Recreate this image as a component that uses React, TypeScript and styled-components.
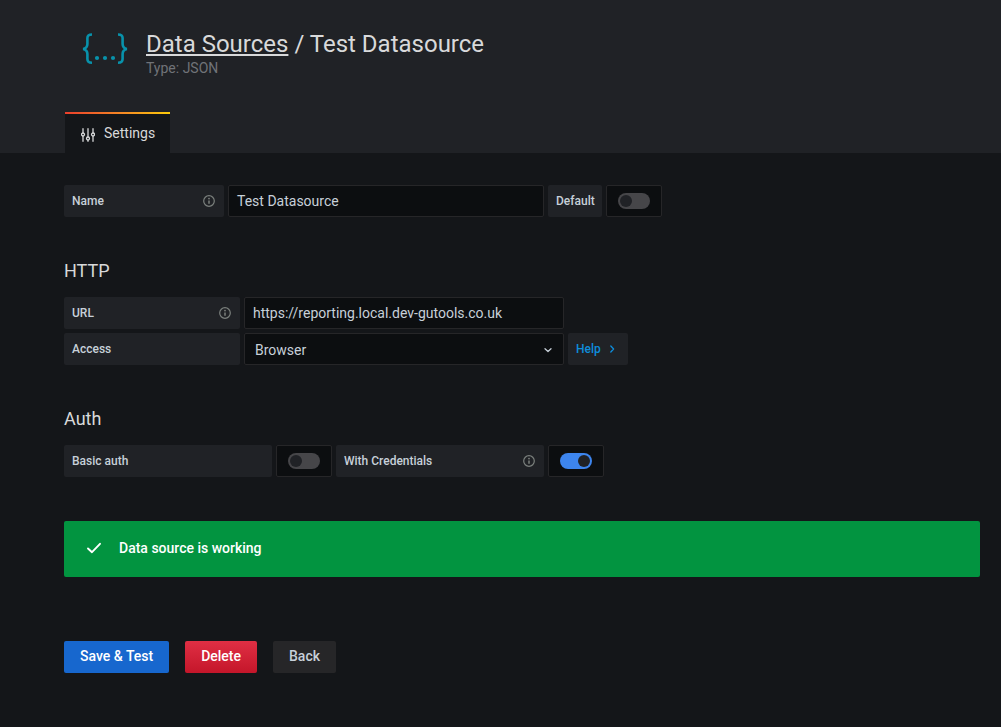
import React from 'react';
import styled, { createGlobalStyle } from 'styled-components';

const Global = createGlobalStyle`
  html, body {
    margin: 0;
    background: #141619;
    font-family: Roboto, "Liberation Sans", sans-serif;
    color: #c7d0d9;
  }
  * { box-sizing: border-box; }
`;

const Header = styled.header`
  height: 153px;
  background: #202226;
  padding: 0 64px 0 65px;
  display: flex;
  flex-direction: column;
  justify-content: space-between;
`;

const HeaderMain = styled.div`
  display: flex;
  padding: 31px 0 0 17px;
`;

const Logo = styled.div`
  display: flex;
  padding-top: 1px;
`;

const Titles = styled.div`
  margin-left: 18px;
`;

const Title = styled.h1`
  margin: 0;
  font-size: 24px;
  font-weight: 400;
  line-height: 26px;
  color: #d8d9da;
  a {
    color: inherit;
    text-decoration: underline;
    text-decoration-thickness: 2px;
    text-underline-offset: 2px;
  }
`;

const SubTitle = styled.div`
  font-size: 14px;
  line-height: 14px;
  margin-top: 4px;
  color: #707378;
`;

const Tab = styled.div`
  width: 105px;
  height: 41px;
  background: linear-gradient(90deg, #eb3f2c, #f58a24 55%, #fbca0a) top / 100% 2px no-repeat, #141619;
  display: flex;
  align-items: center;
  gap: 9px;
  padding: 1px 0 0 16px;
  font-size: 14px;
  color: #d8d9da;
`;

const SlidersSvg = styled.svg`
  margin-top: 3px;
`;

const Main = styled.main`
  padding: 32px 21px 0 64px;
`;

const Row = styled.div`
  display: flex;
  gap: 4px;
  margin-bottom: 4px;
`;

const Label = styled.div<{ $width: number }>`
  width: ${p => p.$width}px;
  height: 32px;
  flex: none;
  background: #202226;
  border-radius: 2px;
  padding: 0 9px 0 8px;
  display: flex;
  align-items: center;
  justify-content: space-between;
  font-size: 12px;
  font-weight: 500;
  color: #c7d0d9;
`;

const Field = styled.div<{ $width: number }>`
  width: ${p => p.$width}px;
  height: 32px;
  flex: none;
  background: #0c0e10;
  border: 1px solid #262628;
  border-radius: 2px;
  padding: 0 10px 0 8px;
  display: flex;
  align-items: center;
  justify-content: space-between;
  font-size: 14px;
  color: #c7d0d9;
`;

const SelectField = styled(Field)`
  padding: 2px 10px 0 10px;
`;

const SwitchBox = styled.div`
  width: 56px;
  height: 32px;
  flex: none;
  background: #0c0e10;
  border: 1px solid #262628;
  border-radius: 2px;
  display: flex;
  align-items: center;
  justify-content: center;
`;

const Track = styled.div<{ $on?: boolean }>`
  width: 32px;
  height: 16px;
  border-radius: 8px;
  background: ${p => (p.$on ? '#3d85ee' : '#464649')};
  padding: 2px;
  display: flex;
  justify-content: ${p => (p.$on ? 'flex-end' : 'flex-start')};
`;

const Knob = styled.div`
  width: 12px;
  height: 12px;
  border-radius: 50%;
  background: #202226;
`;

const Heading = styled.h3`
  margin: 0 0 16px;
  font-size: 18px;
  font-weight: 400;
  line-height: 20px;
  color: #d8d9da;
`;

const Section = styled.section`
  margin-top: 44px;
`;

const HelpButton = styled.div`
  width: 60px;
  height: 32px;
  background: #202226;
  border-radius: 2px;
  padding-left: 8px;
  display: flex;
  align-items: center;
  gap: 6px;
  font-size: 12px;
  font-weight: 500;
  color: #0e8ddb;
`;

const Alert = styled.div`
  width: 916px;
  height: 56px;
  margin-top: 44px;
  background: #029440;
  border-radius: 2px;
  padding: 0 0 2px 22px;
  display: flex;
  align-items: center;
  gap: 17px;
  font-size: 14px;
  font-weight: 500;
  color: #fff;
`;

const Actions = styled.div`
  display: flex;
  gap: 16px;
  margin-top: 64px;
`;

const Button = styled.button<{ $kind: 'primary' | 'danger' | 'secondary' }>`
  height: 32px;
  padding: 0 16px 2px;
  border: 0;
  border-radius: 2px;
  font-family: inherit;
  font-size: 14px;
  font-weight: 500;
  color: ${p => (p.$kind === 'secondary' ? '#c7d0d9' : '#fff')};
  background: ${p =>
    p.$kind === 'primary'
      ? '#1767ce'
      : p.$kind === 'danger'
        ? 'linear-gradient(180deg, #e02f44, #c4162a)'
        : '#262628'};
`;

const JsonLogo = () => (
  <svg width="46" height="33" viewBox="0 0 46 33" fill="none" stroke="#0892ab" strokeWidth="2.6">
    <path d="M10 2.5C6.4 2.5 5.4 3.6 5.4 6V12C5.4 14.8 4.4 16.2 1.2 17C4.4 17.8 5.4 19.2 5.4 22V27C5.4 29.6 6.4 30.8 10 30.8" />
    <path d="M36 2.5C39.6 2.5 40.6 3.6 40.6 6V12C40.6 14.8 41.6 16.2 44.8 17C41.6 17.8 40.6 19.2 40.6 22V27C40.6 29.6 39.6 30.8 36 30.8" />
    <g fill="#0892ab" stroke="none">
      <circle cx="15" cy="26" r="2.1" />
      <circle cx="23" cy="26" r="2.1" />
      <circle cx="31" cy="26" r="2.1" />
    </g>
  </svg>
);

const SlidersIcon = () => (
  <SlidersSvg width="14" height="14" viewBox="0 0 14 14" fill="none" stroke="#d8d9da" strokeWidth="1.3" strokeLinecap="round">
    <path d="M2 .7V5M2 8V13.3M7 .7V9M7 12V13.3M12 .7V5M12 8V13.3" />
    <circle cx="2" cy="6.5" r="1.5" />
    <circle cx="7" cy="10.5" r="1.5" />
    <circle cx="12" cy="6.5" r="1.5" />
  </SlidersSvg>
);

const InfoIcon = () => (
  <svg width="12" height="12" viewBox="0 0 12 12" fill="none">
    <circle cx="6" cy="6" r="5.3" stroke="#7b807d" strokeWidth="1.2" />
    <circle cx="6" cy="3.6" r="0.9" fill="#7b807d" />
    <path d="M6 5.4V8.8" stroke="#7b807d" strokeWidth="1.5" />
  </svg>
);

const ChevronDown = () => (
  <svg width="10" height="10" viewBox="0 0 10 10" fill="none" stroke="#c7d0d9" strokeWidth="1.3" strokeLinecap="round" strokeLinejoin="round">
    <path d="M2 3.8L5 6.6L8 3.8" />
  </svg>
);

const ChevronRight = () => (
  <svg width="10" height="10" viewBox="0 0 10 10" fill="none" stroke="#0e8ddb" strokeWidth="1.3" strokeLinecap="round" strokeLinejoin="round">
    <path d="M3.8 2L6.6 5L3.8 8" />
  </svg>
);

const CheckIcon = () => (
  <svg width="16" height="16" viewBox="0 0 16 16" fill="none" stroke="#fff" strokeWidth="1.9" strokeLinecap="round" strokeLinejoin="round">
    <path d="M2 8.5L6 12.2L14 3.8" />
  </svg>
);

const App = () => (
  <>
    <Global />
    <Header>
      <HeaderMain>
        <Logo>
          <JsonLogo />
        </Logo>
        <Titles>
          <Title>
            <a href="#datasources">Data Sources</a> / Test Datasource
          </Title>
          <SubTitle>Type: JSON</SubTitle>
        </Titles>
      </HeaderMain>
      <Tab>
        <SlidersIcon />
        Settings
      </Tab>
    </Header>
    <Main>
      <Row>
        <Label $width={160}>
          Name
          <InfoIcon />
        </Label>
        <Field $width={316}>Test Datasource</Field>
        <Label $width={54}>Default</Label>
        <SwitchBox>
          <Track>
            <Knob />
          </Track>
        </SwitchBox>
      </Row>

      <Section>
        <Heading>HTTP</Heading>
        <Row>
          <Label $width={176}>
            URL
            <InfoIcon />
          </Label>
          <Field $width={320}>https://reporting.local.dev-gutools.co.uk</Field>
        </Row>
        <Row>
          <Label $width={176}>Access</Label>
          <SelectField $width={320}>
            Browser
            <ChevronDown />
          </SelectField>
          <HelpButton>
            Help
            <ChevronRight />
          </HelpButton>
        </Row>
      </Section>

      <Section>
        <Heading>Auth</Heading>
        <Row>
          <Label $width={208}>Basic auth</Label>
          <SwitchBox>
            <Track>
              <Knob />
            </Track>
          </SwitchBox>
          <Label $width={208}>
            With Credentials
            <InfoIcon />
          </Label>
          <SwitchBox>
            <Track $on>
              <Knob />
            </Track>
          </SwitchBox>
        </Row>
      </Section>

      <Alert>
        <CheckIcon />
        Data source is working
      </Alert>

      <Actions>
        <Button $kind="primary">Save &amp; Test</Button>
        <Button $kind="danger">Delete</Button>
        <Button $kind="secondary">Back</Button>
      </Actions>
    </Main>
  </>
);

export default App;
